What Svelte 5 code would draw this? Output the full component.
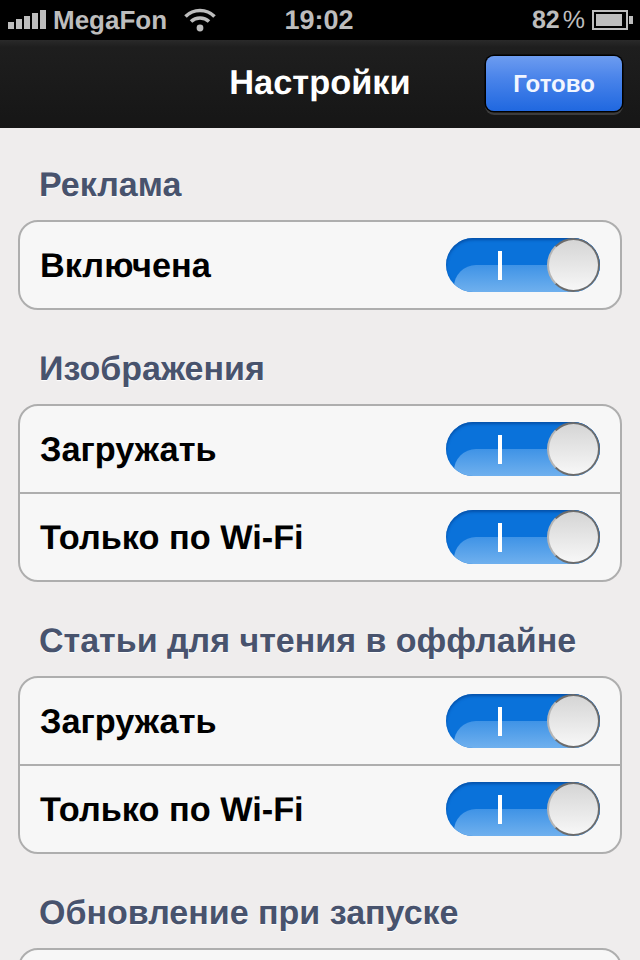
<script lang="ts">
	type Row = { label: string; on: boolean };
	type Section = { title: string; rows: Row[] };

	let sections: Section[] = $state([
		{ title: 'Реклама', rows: [{ label: 'Включена', on: true }] },
		{
			title: 'Изображения',
			rows: [
				{ label: 'Загружать', on: true },
				{ label: 'Только по Wi-Fi', on: true }
			]
		},
		{
			title: 'Статьи для чтения в оффлайне',
			rows: [
				{ label: 'Загружать', on: true },
				{ label: 'Только по Wi-Fi', on: true }
			]
		},
		{ title: 'Обновление при запуске', rows: [] }
	]);
</script>

<div class="screen">
	<div class="status">
		<div class="status-left">
			<svg class="signal" width="38" height="22" viewBox="0 0 38 22">
				<rect x="0" y="13" width="6" height="7" />
				<rect x="8" y="10" width="6" height="10" />
				<rect x="16" y="7" width="6" height="13" />
				<rect x="24" y="4" width="6" height="16" />
				<rect x="32" y="1" width="6" height="19" />
			</svg>
			<span class="carrier">MegaFon</span>
			<svg class="wifi" width="32" height="24" viewBox="0 0 32 24" fill="none" stroke="#bdbdbd" stroke-width="3.6">
				<path d="M1.5 8.5 C9.5 0.5 22.5 0.5 30.5 8.5" />
				<path d="M7 13.5 C12 8.8 20 8.8 25 13.5" />
				<circle cx="16" cy="20" r="3.4" fill="#bdbdbd" stroke="none" />
			</svg>
		</div>
		<span class="clock">19:02</span>
		<div class="status-right">
			<span class="percent">82<span class="pct-sign">%</span></span>
			<svg class="battery" width="42" height="20" viewBox="0 0 42 20">
				<rect x="1" y="1" width="34" height="18" fill="none" stroke="#bdbdbd" stroke-width="2" />
				<rect x="4" y="4" width="26" height="12" fill="#bdbdbd" />
				<rect x="37" y="6" width="4" height="8" fill="#bdbdbd" />
			</svg>
		</div>
	</div>

	<header class="nav">
		<h1>Настройки</h1>
		<button class="done">Готово</button>
	</header>

	<main class="content">
		{#each sections as section}
			<section>
				<h2>{section.title}</h2>
				<div class="group">
					{#each section.rows as row}
						<div class="row">
							<span class="label">{row.label}</span>
							<button class="toggle" aria-label={row.label} onclick={() => (row.on = !row.on)}>
								<i class="bar"></i>
								<i class="knob"></i>
							</button>
						</div>
					{/each}
				</div>
			</section>
		{/each}
	</main>
</div>

<style>
	:global(body) {
		margin: 0;
		background: #efeded;
		overflow: hidden;
	}

	.screen {
		width: 640px;
		height: 960px;
		overflow: hidden;
		font-family: 'Liberation Sans', Arial, sans-serif;
		text-rendering: geometricPrecision;
	}

	.status {
		height: 40px;
		background: #000;
		color: #bdbdbd;
		display: grid;
		grid-template-columns: 1fr auto 1fr;
		align-items: center;
		padding: 0 6px 0 8px;
		font-size: 26px;
		font-weight: 700;
	}

	.status-left {
		display: flex;
		align-items: center;
	}

	.signal {
		fill: #bdbdbd;
		margin-right: 7px;
	}

	.wifi {
		margin-left: 17px;
	}

	.clock {
		font-size: 27px;
		margin-left: -4px;
	}

	.status-right {
		display: flex;
		align-items: center;
		justify-content: flex-end;
		gap: 7px;
	}

	.percent {
		font-size: 25px;
	}

	.pct-sign {
		margin-left: 3px;
		font-weight: 400;
	}

	.nav {
		height: 88px;
		box-sizing: border-box;
		background: linear-gradient(#2a2a2a, #1e1e1e 8%, #161616);
		display: flex;
		align-items: center;
		justify-content: flex-end;
		padding-right: 18px;
		position: relative;
	}

	h1 {
		position: absolute;
		left: 0;
		right: 0;
		margin: 0 0 2px;
		text-align: center;
		color: #fff;
		font-size: 34.4px;
		font-weight: 700;
	}

	.done {
		position: relative;
		width: 136px;
		height: 55px;
		margin-bottom: 1px;
		border: 0;
		border-radius: 8px;
		background: linear-gradient(#6d9cf0, #4a84ea 40%, #2068e0);
		box-shadow: 0 0 0 1.5px #000, 0 3px 0 1px #3c3c3c;
		color: #f2f6ff;
		font: 700 24px 'Liberation Sans', Arial, sans-serif;
		padding: 0;
	}

	.content {
		padding: 0 18px;
	}

	h2 {
		margin: 0;
		height: 94px;
		box-sizing: border-box;
		padding: 41px 0 0 21px;
		font-size: 34px;
		line-height: 36px;
		font-weight: 700;
		color: #48536d;
		text-shadow: 0 1px 1px #fff;
		white-space: nowrap;
	}

	section:first-child h2 {
		height: 92px;
		padding-top: 39px;
	}

	.group {
		background: #f7f7f7;
		border: 2px solid #aeaeae;
		border-radius: 20px;
		min-height: 86px;
	}

	.row {
		height: 86px;
		box-sizing: border-box;
		display: flex;
		align-items: center;
		justify-content: space-between;
		padding: 0 20px;
		font-size: 34.3px;
		font-weight: 700;
		color: #000;
	}

	.label {
		padding-top: 2px;
	}

	.row + .row {
		height: 88px;
		border-top: 2px solid #aeaeae;
	}

	.toggle {
		position: relative;
		width: 154px;
		height: 54px;
		padding: 0;
		border: 0;
		border-radius: 27px;
		overflow: hidden;
		background: #0a72da;
		box-shadow: inset 0 2px 3px #0550a8;
	}

	.toggle::before {
		content: '';
		position: absolute;
		left: 8px;
		right: 0;
		top: 27px;
		bottom: 0;
		border-radius: 22px 0 0 0;
		background: linear-gradient(#3f93e6, #6fb0ee);
	}

	.bar {
		position: absolute;
		left: 52px;
		top: 13px;
		width: 4px;
		height: 29px;
		background: #fff;
	}

	.knob {
		position: absolute;
		right: 0;
		top: 0;
		width: 53px;
		height: 54px;
		box-sizing: border-box;
		border-radius: 50%;
		border: 2px solid #6c6c6c;
		border-left-color: #b5b5b5;
		background: linear-gradient(#d5d5d5, #f7f7f7);
	}
</style>
